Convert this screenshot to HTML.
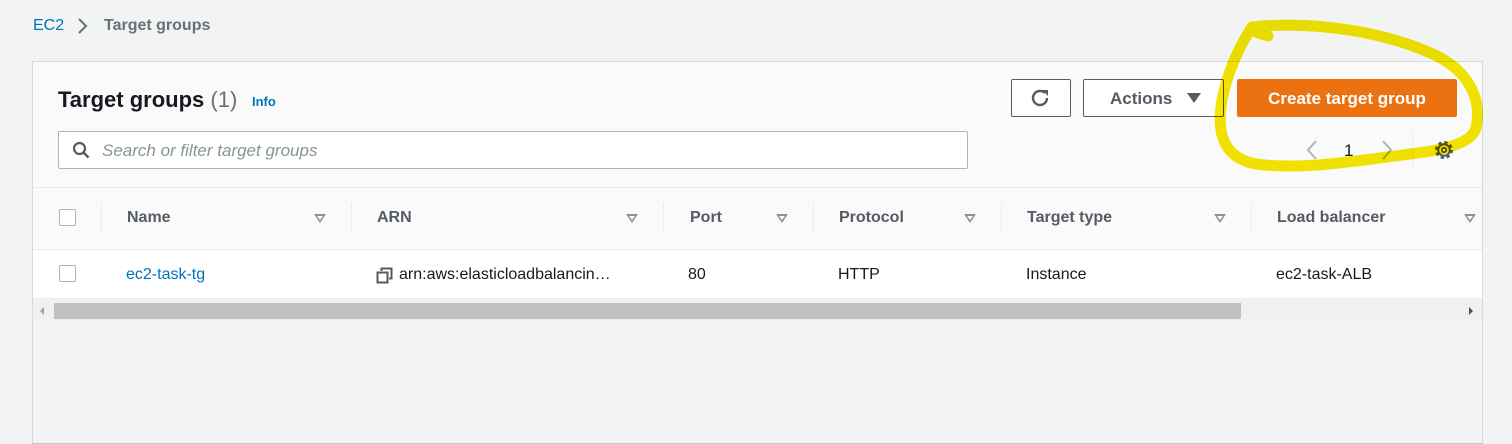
<!DOCTYPE html><html><head><style>
body{margin:0;width:1512px;height:443px;background:#f2f3f3;font-family:"Liberation Sans",sans-serif;position:relative;overflow:hidden}
.a{position:absolute;white-space:nowrap}
.hd{font-weight:bold;color:#545b64;font-size:16px}
.tri{position:absolute;width:0;height:0;border-left:6px solid transparent;border-right:6px solid transparent;border-top:9px solid #879596}
.tri:after{content:"";position:absolute;left:-3px;top:-7px;border-left:3px solid transparent;border-right:3px solid transparent;border-top:4px solid #fafafa}
.sep{position:absolute;top:203px;width:1px;height:30px;background:#eaeded}
.cb{position:absolute;width:15px;height:15px;border:1px solid #aab7b8;border-radius:2px;background:#fff}
.td{font-size:16px;color:#16191f}
</style></head><body>
<div class="a" style="left:33px;top:17px;font-size:16px;color:#0073bb">EC2</div>
<svg class="a" style="left:76px;top:17px" width="14" height="18"><path d="M3 2l7 7-7 7" fill="none" stroke="#687078" stroke-width="2"/></svg>
<div class="a" style="left:104px;top:17px;font-size:16px;font-weight:bold;color:#687078">Target groups</div>
<div class="a" style="left:32px;top:61px;width:1449px;height:381px;border:1px solid #d5dbdb;border-bottom:1px solid #c5cbcb;background:#f2f3f3"></div>
<div class="a" style="left:33px;top:62px;width:1449px;height:126px;background:#fafafa"></div>
<div class="a" style="left:58px;top:87px;font-size:22px;font-weight:bold;color:#16191f">Target groups <span style="font-weight:normal;color:#687078">(1)</span></div>
<div class="a" style="left:252px;top:94px;font-size:13px;font-weight:bold;color:#0073bb">Info</div>
<div class="a" style="left:58px;top:131px;width:908px;height:36px;border:1px solid #aab7b8;border-radius:2px;background:#fff"></div>
<svg class="a" style="left:72px;top:141px" width="20" height="20"><circle cx="7.5" cy="7.5" r="5.5" fill="none" stroke="#545b64" stroke-width="2.2"/><path d="M11.5 11.5l5 5" stroke="#545b64" stroke-width="2.4"/></svg>
<div class="a" style="left:102px;top:141px;font-size:17px;font-style:italic;color:#879596">Search or filter target groups</div>
<div class="a" style="left:1011px;top:79px;width:58px;height:36px;border:1px solid #545b64;border-radius:2px;background:#fff"></div>
<svg class="a" style="left:1030px;top:87px" width="22" height="22"><path d="M17 11a7 7 0 1 1-2.3-5.2" fill="none" stroke="#545b64" stroke-width="2.4"/><path d="M12 3l6 0 0 6z" fill="#545b64"/></svg>
<div class="a" style="left:1083px;top:79px;width:139px;height:36px;border:1px solid #545b64;border-radius:2px;background:#fff"></div>
<div class="a" style="left:1110px;top:89px;font-size:17px;font-weight:bold;color:#545b64">Actions</div>
<div class="a" style="left:1187px;top:93px;border-left:7px solid transparent;border-right:7px solid transparent;border-top:10px solid #545b64"></div>
<div class="a" style="left:1237px;top:79px;width:220px;height:38px;border-radius:2px;background:#ec7211"></div>
<div class="a" style="left:1237px;top:89px;width:220px;text-align:center;font-size:17px;font-weight:bold;color:#fff">Create target group</div>
<svg class="a" style="left:1305px;top:139px" width="14" height="22"><path d="M11 2l-8 9 8 9" fill="none" stroke="#aab7b8" stroke-width="2"/></svg>
<div class="a" style="left:1344px;top:141px;font-size:17px;color:#16191f">1</div>
<svg class="a" style="left:1380px;top:139px" width="14" height="22"><path d="M3 2l8 9-8 9" fill="none" stroke="#aab7b8" stroke-width="2"/></svg>
<div class="a" style="left:1412px;top:130px;width:1px;height:40px;background:#eaeded"></div>
<svg class="a" style="left:1432px;top:138px" width="24" height="24"><circle cx="12" cy="12" r="7.5" fill="none" stroke="#545b64" stroke-width="3" stroke-dasharray="3.2 2.7"/><circle cx="12" cy="12" r="5.8" fill="none" stroke="#545b64" stroke-width="2"/><circle cx="12" cy="12" r="2.2" fill="none" stroke="#545b64" stroke-width="1.8"/></svg>
<div class="a" style="left:33px;top:187px;width:1449px;height:1px;background:#eaeded"></div>
<div class="a" style="left:33px;top:188px;width:1449px;height:61px;background:#fafafa;border-bottom:1px solid #eaeded"></div>
<div class="cb" style="left:59px;top:209px"></div>
<div class="sep" style="left:101px"></div><div class="sep" style="left:351px"></div><div class="sep" style="left:663px"></div><div class="sep" style="left:813px"></div><div class="sep" style="left:1001px"></div><div class="sep" style="left:1251px"></div>
<div class="a hd" style="left:127px;top:209px">Name</div>
<div class="a hd" style="left:377px;top:209px">ARN</div>
<div class="a hd" style="left:690px;top:209px">Port</div>
<div class="a hd" style="left:839px;top:209px">Protocol</div>
<div class="a hd" style="left:1027px;top:209px">Target type</div>
<div class="a hd" style="left:1277px;top:209px">Load balancer</div>
<div class="tri" style="left:314px;top:214px"></div><div class="tri" style="left:626px;top:214px"></div><div class="tri" style="left:776px;top:214px"></div><div class="tri" style="left:964px;top:214px"></div><div class="tri" style="left:1214px;top:214px"></div><div class="tri" style="left:1464px;top:214px"></div>
<div class="a" style="left:33px;top:250px;width:1449px;height:48px;background:#fff;border-bottom:1px solid #eaeded"></div>
<div class="cb" style="left:59px;top:265px"></div>
<div class="a td" style="left:126px;top:266px;color:#0073bb">ec2-task-tg</div>
<svg class="a" style="left:376px;top:267px" width="18" height="18"><rect x="1.5" y="5.5" width="10" height="10" fill="none" stroke="#545b64" stroke-width="2"/><path d="M5.5 4V1.5h10v10H13" fill="none" stroke="#545b64" stroke-width="2"/></svg>
<div class="a td" style="left:399px;top:266px">arn:aws:elasticloadbalancin…</div>
<div class="a td" style="left:688px;top:266px">80</div>
<div class="a td" style="left:838px;top:266px">HTTP</div>
<div class="a td" style="left:1026px;top:266px">Instance</div>
<div class="a td" style="left:1276px;top:266px">ec2-task-ALB</div>
<div class="a" style="left:33px;top:300px;width:1449px;height:20px;background:#f0f0f0"></div>
<div class="a" style="left:54px;top:303px;width:1187px;height:16px;background:#c1c1c1"></div>
<div class="a" style="left:40px;top:307px;border-top:4px solid transparent;border-bottom:4px solid transparent;border-right:4px solid #a3a3a3"></div>
<div class="a" style="left:1469px;top:307px;border-top:4px solid transparent;border-bottom:4px solid transparent;border-left:4px solid #505050"></div>
<svg class="a" style="left:0;top:0;mix-blend-mode:multiply" width="1512" height="443"><path d="M1252 27 C1320 20 1390 34 1435 55 C1470 72 1482 100 1476 128 C1472 143 1445 150 1410 154 C1350 162 1300 170 1256 164 C1224 158 1216 134 1222 100 C1228 70 1240 46 1250 30 L1268 36" fill="none" stroke="#f5e600" stroke-width="11" stroke-linecap="round" stroke-linejoin="round"/></svg>
</body></html>
